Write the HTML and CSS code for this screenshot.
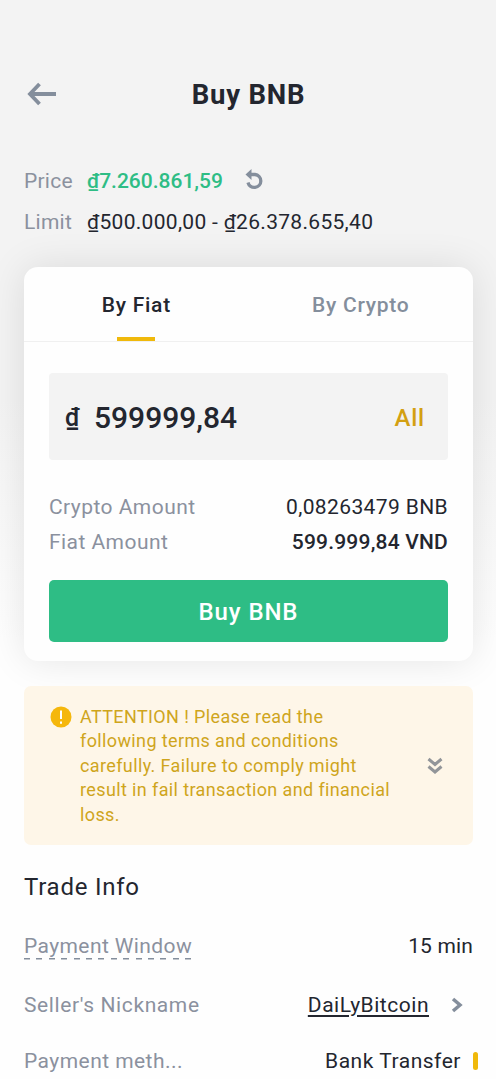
FILE: index.html
```html
<!DOCTYPE html>
<html lang="en">
<head>
<meta charset="utf-8">
<title>Buy BNB</title>
<link rel="stylesheet" href="styles.css">
</head>
<body>
<main class="screen">
  <header class="header">
    <svg class="back" viewBox="0 0 30 24" width="30" height="24"><path d="M12.500 2 3 12l9.500 10M3 12h26"/></svg>
    <h1 class="title"><span>Buy BNB</span></h1>
  </header>
  <section class="quote">
    <div class="quote-row"><span class="label price-label">Price</span><span class="price">₫7.260.861,59</span>
      <svg class="refresh" viewBox="0 0 20 22" width="20" height="22"><path class="ring" d="M5 5.500h5a6.500 6.500 0 1 1-7 8"/><path class="tip" d="M0.500 5.500 6.500 0v11z"/></svg>
    </div>
    <div class="quote-row"><span class="label limit-label">Limit</span><span class="limit">₫500.000,00 - ₫26.378.655,40</span></div>
  </section>
  <section class="card">
    <nav class="tabs"><a class="tab active"><span class="fiat-tab">By Fiat</span></a><a class="tab"><span class="crypto-tab">By Crypto</span></a></nav>
    <div class="card-body">
      <div class="field"><span class="currency">₫</span><span class="amount">599999,84</span><span class="all">All</span></div>
      <div class="sum"><span class="label crypto-label">Crypto Amount</span><span class="crypto-value">0,08263479 BNB</span></div>
      <div class="sum"><span class="label fiat-label">Fiat Amount</span><span class="fiat-value">599.999,84 VND</span></div>
      <button class="buy"><span>Buy BNB</span></button>
    </div>
  </section>
  <section class="notice">
    <svg class="alert" viewBox="0 0 22 22" width="22" height="22"><circle cx="11" cy="11" r="10.500"/><path d="M11 4.500v8.500M11 15.500v2.200"/></svg>
    <p class="notice-text">ATTENTION ! Please read the<br>following terms and conditions<br>carefully. Failure to comply might<br>result in fail transaction and financial<br>loss.</p>
    <svg class="expand" viewBox="0 0 16 18" width="16" height="18"><path d="M1.500 2 8 7.500 14.500 2M1.500 9.500 8 15l6.500-5.500"/></svg>
  </section>
  <section class="info">
    <h2 class="info-title">Trade Info</h2>
    <div class="info-row"><span class="label window-label">Payment Window</span><span class="minutes">15 min</span></div>
    <div class="info-row"><span class="label seller-label">Seller's Nickname</span><span class="nickname">DaiLyBitcoin</span>
      <svg class="chevron" viewBox="0 0 12 16" width="12" height="16"><path d="M2 2l7 6-7 6"/></svg></div>
    <div class="info-row method"><span class="label method-label">Payment meth...</span><span class="bank">Bank Transfer</span><i class="mark"></i></div>
  </section>
</main>
</body>
</html>
```
FILE: styles.css
```css
* { box-sizing: border-box; margin: 0; padding: 0; }
body {
  font-family: Roboto, "Liberation Sans", sans-serif;
  color: #23262f;
  background: #fefefe;
}
svg { flex: none; fill: none; stroke: #848e9c; }
.screen {
  height: 1079px;
  overflow: hidden;
  padding: 70px 23px 0 24px;
  background: linear-gradient(#f3f3f3 0, #f3f3f3 400px, #fefefe 640px);
}
.header { display: flex; align-items: center; height: 49px; }
.back { margin: -2px 0 0 3px; stroke-width: 3.800; }
.title { flex: 1; margin-right: 33px; text-align: center; font-size: 27.500px; font-weight: 700; letter-spacing: .75px; }
.quote { padding-top: 41px; font-size: 21px; }
.quote-row { display: flex; align-items: center; height: 41.500px; }
.quote .label { width: 63px; letter-spacing: .25px; }
.label { color: #8b919e; }
.price { color: #2ebd85; font-weight: 500; }
.limit { letter-spacing: .3px; }
.refresh { margin: -2px 0 0 22px; }
.refresh .ring { stroke-width: 3.300; }
.refresh .tip { fill: #848e9c; stroke: none; }
.card {
  height: 394px;
  margin-top: 24px;
  border-radius: 14px;
  background: #fefefe;
  box-shadow: 0 0 38px rgba(0, 0, 0, .1);
}
.tabs { display: flex; height: 75px; border-bottom: 1px solid #f0f0f0; font-size: 21px; font-weight: 500; letter-spacing: .75px; }
.tab { position: relative; flex: 1; text-align: center; line-height: 77px; color: #848e9c; }
.tab.active { color: #23262f; }
.tab.active::after { content: ""; position: absolute; left: 93px; bottom: 0; width: 38px; height: 4px; background: #f0b90b; }
.card-body { padding: 31px 25px 0; }
.field { display: flex; align-items: center; height: 87px; margin-bottom: 29px; padding: 2px 23px 0 16px; border-radius: 4px; background: #f3f3f3; }
.currency { width: 29px; font-size: 25px; font-weight: 500; }
.amount { flex: 1; font-size: 30px; font-weight: 500; }
.all { color: #d3a012; font-size: 24px; font-weight: 500; letter-spacing: .8px; }
.sum { display: flex; align-items: center; justify-content: space-between; height: 35px; font-size: 21px; }
.crypto-label, .fiat-label { letter-spacing: .45px; }
.crypto-value { letter-spacing: .38px; }
.fiat-value { font-weight: 500; letter-spacing: .2px; }
.buy { width: 100%; height: 62px; margin-top: 20.500px; padding-top: 2px; border: 0; border-radius: 5px; background: #2ebd85; color: #fff; font: 500 24px Roboto, sans-serif; letter-spacing: .9px; }
.notice { display: flex; align-items: flex-start; height: 159px; margin-top: 25px; padding: 19px 30px 0 26px; border-radius: 7px; background: #fef6e8; }
.alert { margin-top: 1px; stroke: #fff; stroke-width: 2; }
.alert circle { fill: #f5b70c; stroke: none; }
.notice-text { flex: 1; margin-left: 8px; color: #cfa51c; font-size: 18px; line-height: 24.400px; letter-spacing: .38px; white-space: nowrap; }
.expand { margin-top: 52px; stroke: #929599; stroke-width: 3; }
.info { padding-top: 22px; }
.info-title { height: 49px; line-height: 40px; font-size: 24px; font-weight: 400; letter-spacing: .75px; }
.info-row { display: flex; align-items: center; height: 59px; font-size: 21px; }
.info-row.method { height: 53px; }
.info-row .label { margin-right: auto; }
.info-row .window-label {
  margin-top: 2px;
  padding-bottom: 2px;
  line-height: 24px;
  letter-spacing: .4px;
  background: repeating-linear-gradient(90deg, #848e9c 0 6px, transparent 6px 12.400px) left bottom / 100% 1.500px no-repeat;
}
.minutes { letter-spacing: .15px; }
.seller-label { letter-spacing: .6px; }
.method-label { letter-spacing: .45px; }
.nickname, .bank { letter-spacing: .52px; }
.nickname { text-decoration: underline; text-decoration-thickness: 1.500px; text-underline-offset: 3px; }
.chevron { margin: 0 10px 0 22px; stroke-width: 3.500; }
.mark { width: 5px; height: 18px; margin: 0 -5px 0 12px; border-radius: 3px; background: #f0b90b; }
```
